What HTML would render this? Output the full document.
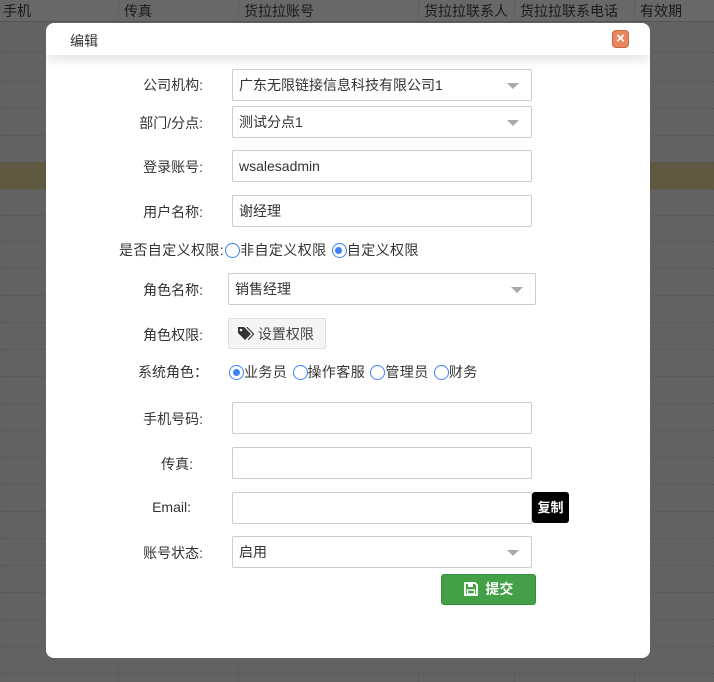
<!DOCTYPE html>
<html><head><meta charset="utf-8"><style>
*{box-sizing:border-box;margin:0;padding:0}
body{width:714px;height:682px;overflow:hidden;background:#626262;font-family:"Liberation Sans","Noto Sans CJK SC",sans-serif;font-size:14px;color:#333;position:relative}
.hdr{position:absolute;left:0;top:0;width:714px;height:22px;background:#686868;border-bottom:1px solid #555;color:#1a1a1a}
.hdr span{position:absolute;top:1px;font-size:14px}
.vl{position:absolute;top:0;height:682px;border-left:1px dotted #585858}
.row{position:absolute;left:0;width:714px;border-top:1px dotted #555}
.yel{position:absolute;left:0;top:162px;width:714px;height:27px;background:#5f5841}
.modal{position:absolute;left:46px;top:23px;width:604px;height:635px;background:#fff;border-radius:8px;overflow:hidden}
.mh{height:32px;box-shadow:0 4px 12px rgba(0,0,0,.12);position:relative}
.mh .t{position:absolute;left:24px;top:8px;font-size:14px;color:#333}
.cl{position:absolute;left:566px;top:7px;width:17px;height:18px;background:#e8875f;border:1px solid #c96a44;border-radius:4px;color:#fff;font-size:15px;line-height:15px;text-align:center;font-weight:bold}
.lb{position:absolute;width:160px;text-align:right;font-size:14px;color:#333}
.in{position:absolute;height:32px;border:1px solid #ccc;border-radius:2px;padding-left:6px;line-height:30px;font-size:14px;color:#333;background:#fff}
.arr{position:absolute;right:12px;top:13px;border-left:6px solid transparent;border-right:6px solid transparent;border-top:6px solid #aaa}
.rd{display:inline-block;width:15px;height:15px;border:1.5px solid #3b82f6;border-radius:50%;vertical-align:-3px;position:relative;margin-right:0px;margin-left:1px}
.rd.on::after{content:"";position:absolute;left:2.5px;top:2.5px;width:7px;height:7px;border-radius:50%;background:#3b82f6}
.tx{position:absolute;font-size:14px;color:#333;white-space:nowrap}
</style></head><body>
<div class="hdr"><span style="left:3px">手机</span><span style="left:124px">传真</span><span style="left:244px">货拉拉账号</span><span style="left:424px">货拉拉联系人</span><span style="left:520px">货拉拉联系电话</span><span style="left:640px">有效期</span></div>
<div class="vl" style="left:118px"></div><div class="vl" style="left:238px"></div><div class="vl" style="left:418px"></div><div class="vl" style="left:514px"></div><div class="vl" style="left:634px"></div>
<div class="yel"></div>
<div class="row" style="top:52px"></div><div class="row" style="top:81px"></div><div class="row" style="top:108px"></div><div class="row" style="top:135px"></div><div class="row" style="top:162px"></div><div class="row" style="top:189px"></div><div class="row" style="top:215px"></div><div class="row" style="top:241px"></div><div class="row" style="top:268px"></div><div class="row" style="top:295px"></div><div class="row" style="top:322px"></div><div class="row" style="top:349px"></div><div class="row" style="top:376px"></div><div class="row" style="top:403px"></div><div class="row" style="top:430px"></div><div class="row" style="top:457px"></div><div class="row" style="top:484px"></div><div class="row" style="top:511px"></div><div class="row" style="top:538px"></div><div class="row" style="top:565px"></div><div class="row" style="top:592px"></div><div class="row" style="top:619px"></div><div class="row" style="top:646px"></div><div class="row" style="top:673px"></div>
<div class="modal">
<div class="mh"><span class="t">编辑</span><div class="cl">×</div></div>
<div class="lb" style="left:0;top:52px;width:157px">公司机构:</div>
<div class="in" style="left:186px;top:46px;width:300px">广东无限链接信息科技有限公司1<i class="arr"></i></div>
<div class="lb" style="left:0;top:90px;width:157px">部门/分点:</div>
<div class="in" style="left:186px;top:83px;width:300px">测试分点1<i class="arr"></i></div>
<div class="lb" style="left:0;top:134px;width:157px">登录账号:</div>
<div class="in" style="left:186px;top:127px;width:300px">wsalesadmin</div>
<div class="lb" style="left:0;top:179px;width:157px">用户名称:</div>
<div class="in" style="left:186px;top:172px;width:300px">谢经理</div>
<div class="tx" style="left:73px;top:217px;letter-spacing:0.4px">是否自定义权限:<span class="rd"></span>非自定义权限 <span class="rd on"></span>自定义权限</div>
<div class="lb" style="left:0;top:257px;width:157px">角色名称:</div>
<div class="in" style="left:182px;top:250px;width:308px">销售经理<i class="arr"></i></div>
<div class="lb" style="left:0;top:302px;width:157px">角色权限:</div>
<div class="in" style="left:182px;top:295px;width:98px;height:31px;background:#f5f5f5;border-color:#ddd;padding-left:8px;color:#444"><svg width="17" height="15" viewBox="0 0 17 15" style="vertical-align:-2px"><path d="M1 1h6l7 7-6 6-7-7z" fill="#333"/><circle cx="4" cy="4" r="1.3" fill="#f5f5f5"/><path d="M9 1h1.5l7 7-6 6-.8-.8 5.2-5.2z" fill="#333"/></svg> 设置权限</div>
<div class="tx" style="left:92px;top:339px">系统角色：</div>
<div class="tx" style="left:182px;top:339px;letter-spacing:0.4px"><span class="rd on"></span>业务员 <span class="rd"></span>操作客服 <span class="rd"></span>管理员 <span class="rd"></span>财务</div>
<div class="lb" style="left:0;top:386px;width:157px">手机号码:</div>
<div class="in" style="left:186px;top:379px;width:300px"></div>
<div class="lb" style="left:0;top:431px;width:147px">传真:</div>
<div class="in" style="left:186px;top:424px;width:300px"></div>
<div class="lb" style="left:0;top:476px;width:145px">Email:</div>
<div class="in" style="left:186px;top:469px;width:300px"></div>
<div style="position:absolute;left:486px;top:469px;width:37px;height:31px;background:#000;border-radius:3px;color:#fff;font-size:13px;font-weight:bold;text-align:center;line-height:31px">复制</div>
<div class="lb" style="left:0;top:520px;width:157px">账号状态:</div>
<div class="in" style="left:186px;top:513px;width:300px">启用<i class="arr"></i></div>
<div style="position:absolute;left:395px;top:551px;width:95px;height:31px;background:#43a047;border:1px solid #3a8f3e;border-radius:3px;color:#fff;font-size:14px;font-weight:bold;text-align:center;line-height:29px"><svg width="14" height="14" viewBox="0 0 14 14" style="vertical-align:-2px"><path d="M1 1h10l2 2v10H1z" fill="none" stroke="#fff" stroke-width="1.8"/><rect x="4" y="1.5" width="5" height="3.5" fill="#fff"/><rect x="3.5" y="8" width="7" height="4" fill="none" stroke="#fff" stroke-width="1.4"/></svg> &nbsp;提交</div>
</div>
</body></html>
